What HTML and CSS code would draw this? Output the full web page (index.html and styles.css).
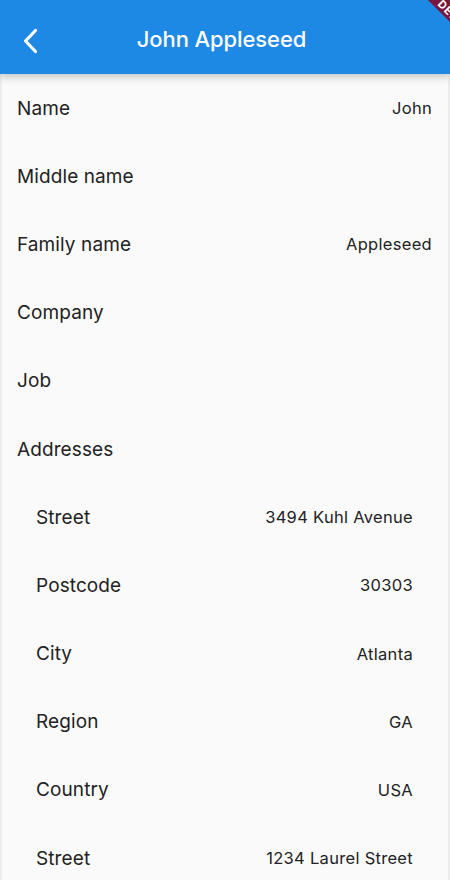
FILE: index.html
```html
<!DOCTYPE html>
<html>
<head>
<meta charset="utf-8">
<link rel="stylesheet" href="styles.css">
</head>
<body>
<div class="screen">
  <header class="appbar">
    <button class="back" aria-label="Back">
      <svg width="20" height="26" viewBox="0 0 20 26"><path d="M14.5 2.5 L4.5 13 L14.5 23.5" fill="none" stroke="#fff" stroke-width="3.2" stroke-linecap="round" stroke-linejoin="round"/></svg>
    </button>
    <h1 class="title">John Appleseed</h1>
  </header>
  <div class="banner"><span>DEBUG</span></div>
  <main class="list">
    <div class="row"><span class="label">Name</span><span class="value">John</span></div>
    <div class="row"><span class="label">Middle name</span><span class="value"></span></div>
    <div class="row"><span class="label">Family name</span><span class="value">Appleseed</span></div>
    <div class="row"><span class="label">Company</span><span class="value"></span></div>
    <div class="row"><span class="label">Job</span><span class="value"></span></div>
    <div class="row"><span class="label">Addresses</span></div>
    <div class="row sub"><span class="label">Street</span><span class="value">3494 Kuhl Avenue</span></div>
    <div class="row sub"><span class="label">Postcode</span><span class="value">30303</span></div>
    <div class="row sub"><span class="label">City</span><span class="value">Atlanta</span></div>
    <div class="row sub"><span class="label">Region</span><span class="value">GA</span></div>
    <div class="row sub"><span class="label">Country</span><span class="value">USA</span></div>
    <div class="row sub"><span class="label">Street</span><span class="value">1234 Laurel Street</span></div>
  </main>
</div>
</body>
</html>
```
FILE: styles.css
```css
* { box-sizing: border-box; }
html, body { margin: 0; padding: 0; }
body {
  width: 450px;
  height: 880px;
  overflow: hidden;
  background: #fafafa;
  font-family: Inter, "Noto Sans", sans-serif;
  color: #1c1c1c;
}
.screen {
  position: relative;
  width: 450px;
  height: 880px;
  overflow: hidden;
  display: flex;
  flex-direction: column;
}
.appbar {
  position: relative;
  z-index: 2;
  flex: 0 0 74px;
  background: #1e88e5;
  display: flex;
  align-items: center;
  justify-content: center;
  padding: 4px 7px 0 0;
  box-shadow: 0 3px 8px rgba(0,0,0,0.22);
}
.back {
  position: absolute;
  left: 21px;
  top: 28px;
  padding: 0;
  border: 0;
  background: none;
  display: flex;
}
.title {
  margin: 0;
  color: #fff;
  font-size: 22px;
  font-weight: 500;
  letter-spacing: -0.1px;
}
.banner {
  position: absolute;
  z-index: 3;
  top: -9px;
  right: -47px;
  width: 120px;
  height: 15px;
  background: rgba(130, 10, 40, 0.9);
  transform: rotate(45deg);
  display: flex;
  justify-content: center;
  align-items: center;
}
.banner span {
  color: #fff;
  font-size: 11px;
  font-weight: 700;
  letter-spacing: 1px;
  margin-left: 52px;
}
.list {
  flex: 1;
  display: flex;
  flex-direction: column;
  border-left: 2px solid #ececec;
  border-right: 2px solid #ececec;
  border-bottom: 2px solid #ececec;
}
.row {
  flex: 0 0 68.2px;
  display: flex;
  align-items: center;
  justify-content: space-between;
  padding: 0 16px 0 15px;
}
.row.sub {
  padding: 0 35px 0 34px;
}
.label {
  font-size: 19px;
  color: #222;
  letter-spacing: 0.1px;
}
.value {
  font-size: 16.5px;
  color: #222;
  letter-spacing: 0.3px;
}
```
